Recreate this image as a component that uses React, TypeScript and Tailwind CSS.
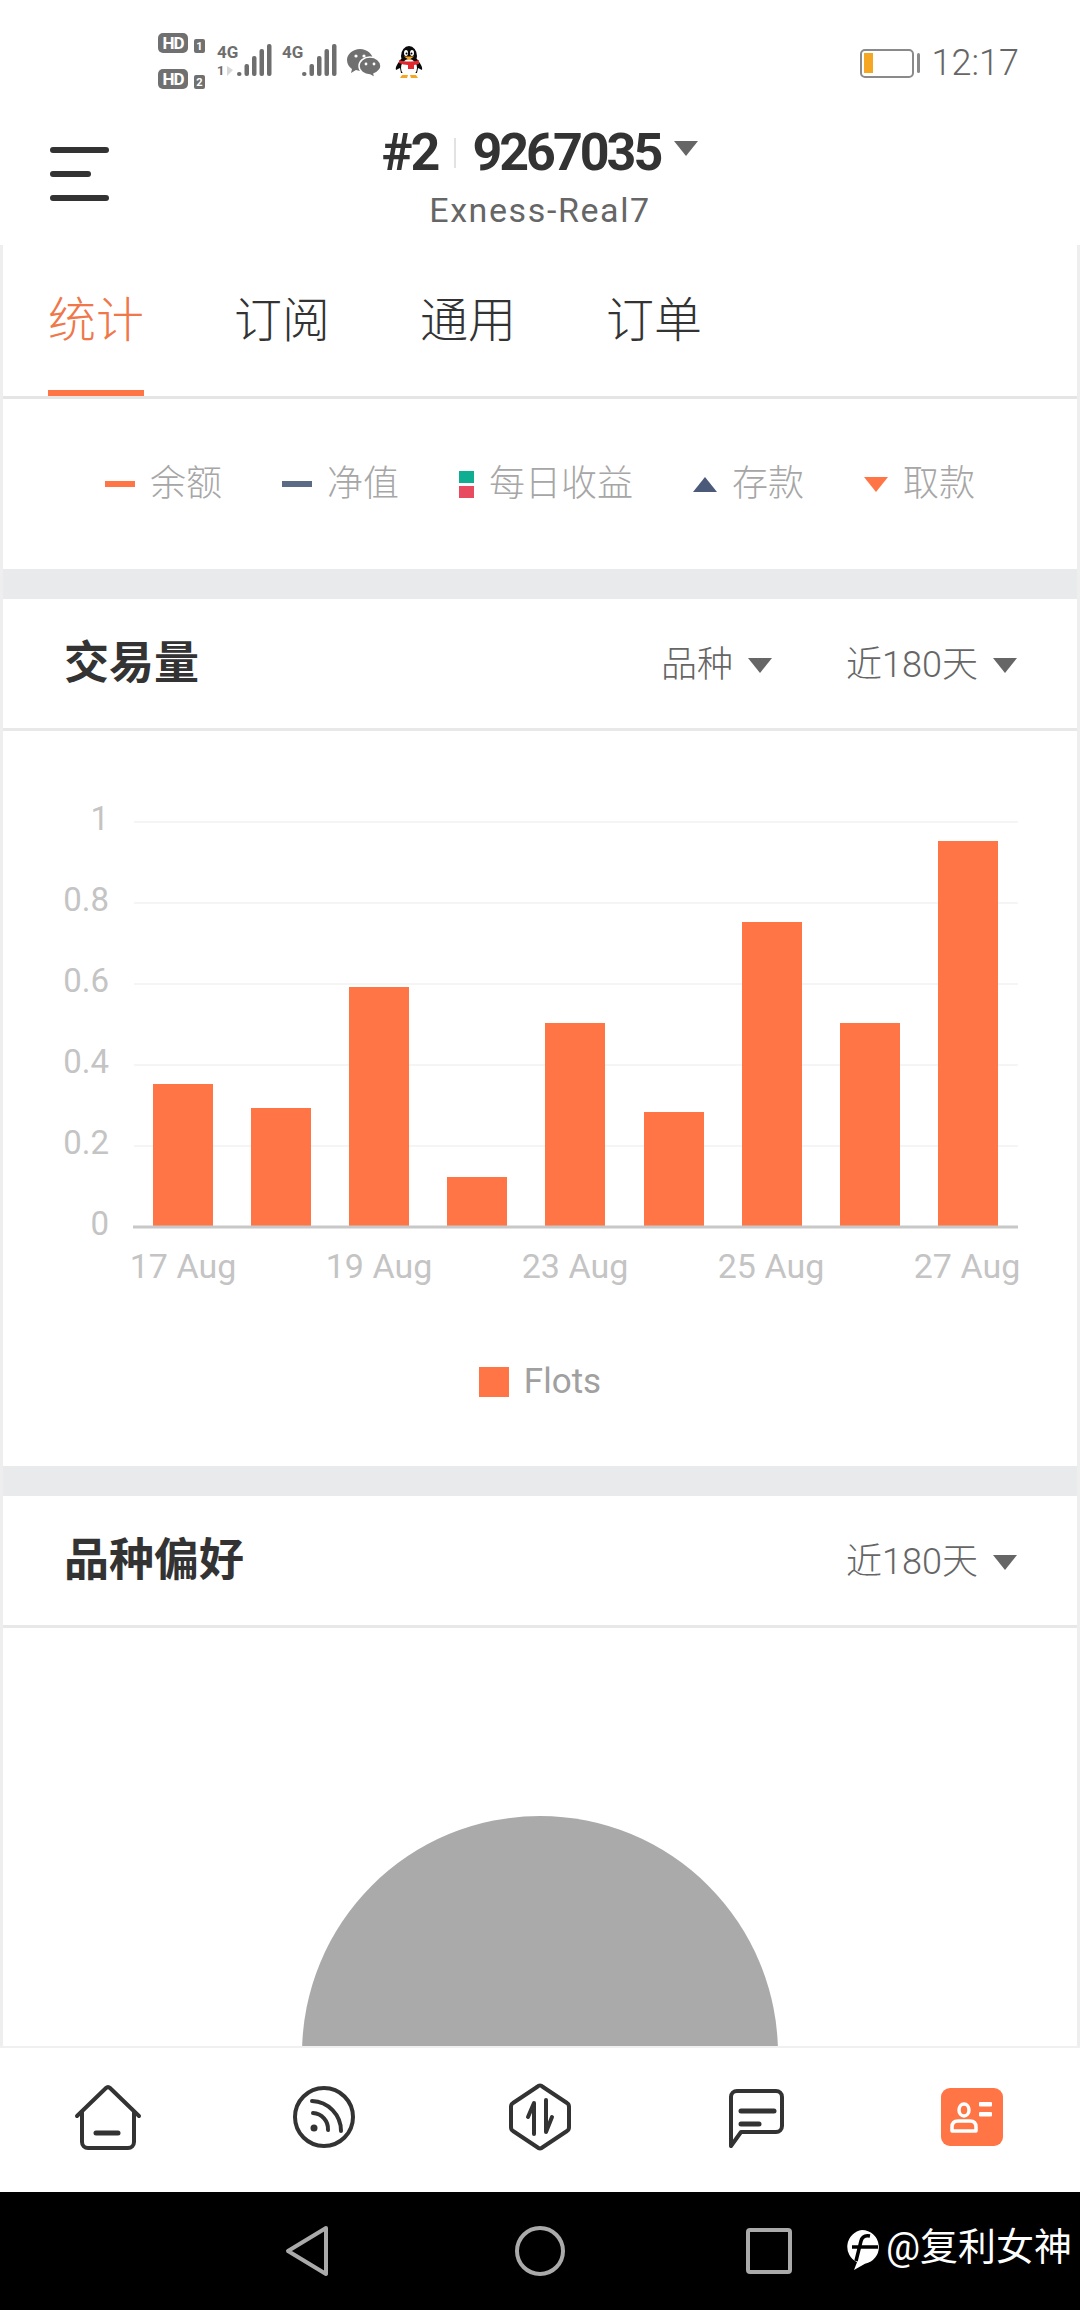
import React from "react";

const bars = [
  { x: 153, top: 1084 },
  { x: 251, top: 1108 },
  { x: 349, top: 987 },
  { x: 447, top: 1177 },
  { x: 545, top: 1023 },
  { x: 644, top: 1112 },
  { x: 742, top: 922 },
  { x: 840, top: 1023 },
  { x: 938, top: 841 },
];

const yTicks = [
  { label: "1", y: 822 },
  { label: "0.8", y: 903 },
  { label: "0.6", y: 984 },
  { label: "0.4", y: 1065 },
  { label: "0.2", y: 1146 },
  { label: "0", y: 1227 },
];

const xTicks = [
  { label: "17 Aug", x: 183 },
  { label: "19 Aug", x: 379 },
  { label: "23 Aug", x: 575 },
  { label: "25 Aug", x: 771 },
  { label: "27 Aug", x: 967 },
];

const Triangle = ({ up = false, color = "#666666" }: { up?: boolean; color?: string }) => (
  <svg width="24" height="15" viewBox="0 0 24 15" className="shrink-0">
    <polygon points={up ? "12,0 24,15 0,15" : "0,0 24,0 12,15"} fill={color} />
  </svg>
);

const Dropdown = ({ label }: { label: string }) => (
  <div className="mt-[3px] flex items-center gap-[15px] text-[36px] font-light text-[#666666]">
    <span>{label}</span>
    <Triangle />
  </div>
);

const SectionHeader = ({ title, filters }: { title: string; filters: string[] }) => (
  <div className="flex h-[132px] shrink-0 items-center justify-between border-b-[3px] border-[#e8e8e8] pl-[61px] pr-[60px]">
    <h2 className="text-[45px] font-bold text-[#333333]">{title}</h2>
    <div className="flex items-center gap-[74px]">
      {filters.map((f) => (
        <Dropdown key={f} label={f} />
      ))}
    </div>
  </div>
);

const Signal = ({ roaming }: { roaming?: boolean }) => (
  <svg width="56" height="38" viewBox="0 0 56 38" className="overflow-visible">
    <text x="0" y="17" className="fill-[#6e6e6e] text-[17px] font-bold">
      4G
    </text>
    {roaming && (
      <text x="0" y="34" className="fill-[#6e6e6e] text-[13px] font-bold">
        1
      </text>
    )}
    {roaming && <polygon points="10,25 16,29 10,35" fill="#d8d8d8" />}
    {[
      { x: 20, h: 4 },
      { x: 27.5, h: 12 },
      { x: 35, h: 20 },
      { x: 42.5, h: 27 },
      { x: 50, h: 32 },
    ].map((b) => (
      <rect key={b.x} x={b.x} y={35 - b.h} width="4.5" height={b.h} rx="2" fill="#6e6e6e" />
    ))}
  </svg>
);

const HdBadge = ({ n }: { n: string }) => (
  <div className="flex items-end gap-[6px]">
    <div className="flex h-[20px] w-[30px] items-center justify-center rounded-[5px] bg-[#707070] text-[17px] font-bold leading-none tracking-[-1px] text-white">
      HD
    </div>
    <div className="flex h-[14px] w-[11px] items-center justify-center rounded-[2px] bg-[#707070] text-[11px] font-bold leading-none text-white">
      {n}
    </div>
  </div>
);

const WeChat = () => (
  <svg width="34" height="30" viewBox="0 0 34 30">
    <path d="M13 1C6 1 0 6 0 12c0 4 2 7 5 9l-1 4 5-3c1 0 3 1 4 1 7 0 13-5 13-11S20 1 13 1z" fill="#707070" />
    <path d="M23 9c-6 0-11 4-11 9s5 9 11 9l5 3-1-4c4-2 7-5 7-8 0-5-5-9-11-9z" fill="#707070" stroke="#fff" strokeWidth="1.5" />
    <circle cx="9" cy="8" r="1.6" fill="#fff" />
    <circle cx="17" cy="8" r="1.6" fill="#fff" />
    <circle cx="19" cy="16" r="1.4" fill="#fff" />
    <circle cx="27" cy="16" r="1.4" fill="#fff" />
  </svg>
);

const Penguin = () => (
  <svg width="28" height="32" viewBox="0 0 28 32">
    <ellipse cx="14" cy="10" rx="8" ry="10" fill="#0a0a0a" />
    <path d="M6 13C3 17 0 21 1 24l4-2 1 5h16l1-5 4 2c1-3-2-7-5-11z" fill="#0a0a0a" />
    <ellipse cx="14" cy="22" rx="8" ry="9" fill="#fff" />
    <ellipse cx="11" cy="7" rx="2" ry="3" fill="#fff" />
    <ellipse cx="17" cy="7" rx="2" ry="3" fill="#fff" />
    <circle cx="11.5" cy="7.5" r="1" fill="#000" />
    <circle cx="16.5" cy="7.5" r="1" fill="#000" />
    <path d="M9 10.5h10l-5 3.5z" fill="#f5a623" />
    <path d="M4 14c6 2 14 2 20 0v4l-5 1v4h-6v-4c-3 0-6-1-9-2z" fill="#e0282e" />
    <path d="M7 29h6l-1 3H5zM15 29h6l2 3h-7z" fill="#f5a623" />
  </svg>
);

const HomeIcon = () => (
  <svg width="70" height="70" viewBox="0 0 70 70" fill="none" stroke="#333333" strokeWidth="4" strokeLinecap="round" strokeLinejoin="round">
    <path d="M4 34 33 6q2-2 4 0l29 28" />
    <path d="M9 30v30a6 6 0 0 0 6 6h40a6 6 0 0 0 6-6V30" />
    <path d="M23 51h22" strokeWidth="5" />
  </svg>
);

const RssIcon = () => (
  <svg width="70" height="70" viewBox="0 0 70 70" fill="none" stroke="#333333" strokeWidth="4" strokeLinecap="round">
    <circle cx="35" cy="35" r="29" />
    <path d="M24 31a16 16 0 0 1 15 17" />
    <path d="M23 19a30 30 0 0 1 29 30" />
    <circle cx="25" cy="46" r="3.5" fill="#333333" stroke="none" />
  </svg>
);

const TradeIcon = () => (
  <svg width="70" height="70" viewBox="0 0 70 70" fill="none" stroke="#333333" strokeWidth="4" strokeLinecap="round" strokeLinejoin="round">
    <path d="M32 5q3-3 6 0l24 16q2 1 2 4v20q0 3-2 4L38 65q-3 3-6 0L8 49q-2-1-2-4V25q0-3 2-4z" />
    <path d="M29 52V21l-6 14" />
    <path d="M41 18v32l6-15" />
  </svg>
);

const ChatIcon = () => (
  <svg width="70" height="70" viewBox="0 0 70 70" fill="none" stroke="#333333" strokeWidth="4" strokeLinecap="round" strokeLinejoin="round">
    <path d="M10 64V15a6 6 0 0 1 6-6h39a6 6 0 0 1 6 6v29a6 6 0 0 1-6 6H20z" />
    <path d="M20 29h33" strokeWidth="5" />
    <path d="M20 42h18" strokeWidth="5" />
  </svg>
);

const ProfileIcon = () => (
  <svg width="62" height="58" viewBox="0 0 62 58">
    <rect width="62" height="58" rx="9" fill="#ff7545" />
    <ellipse cx="23" cy="22" rx="5" ry="6" fill="none" stroke="#fff" strokeWidth="3.5" />
    <path d="M11 43v-4q0-6 6-6h12q6 0 6 6v4z" fill="none" stroke="#fff" strokeWidth="3.5" strokeLinejoin="round" />
    <rect x="38" y="14" width="13" height="4.5" rx="1" fill="#fff" />
    <rect x="38" y="24" width="13" height="4.5" rx="1" fill="#fff" />
  </svg>
);

export default function App() {
  return (
    <div className="flex h-[2310px] w-[1080px] flex-col overflow-hidden bg-white [font-family:Roboto,'Noto_Sans_CJK_SC',sans-serif]">
      {/* status bar */}
      <div className="flex h-[75px] shrink-0 items-start justify-between pl-[158px] pr-[61px] pt-[33px]">
        <div className="flex items-start">
          <div className="flex flex-col gap-[16px]">
            <HdBadge n="1" />
            <HdBadge n="2" />
          </div>
          <div className="ml-[12px] mt-[8px] flex gap-[9px]">
            <Signal roaming />
            <Signal />
          </div>
          <div className="ml-[9px] mt-[15px]">
            <WeChat />
          </div>
          <div className="ml-[14px] mt-[13px]">
            <Penguin />
          </div>
        </div>
        <div className="mt-[12px] flex items-center">
          <div className="flex h-[29px] w-[54px] items-center rounded-[5px] border-2 border-[#8a8a8a] pl-[2px]">
            <div className="h-[20px] w-[9px] bg-[#f5a623]" />
          </div>
          <div className="ml-[3px] h-[20px] w-[3px] rounded-full bg-[#8a8a8a]" />
          <span className="ml-[12px] text-[36px] font-light leading-none text-[#666666]">12:17</span>
        </div>
      </div>

      {/* header */}
      <div className="grid h-[170px] shrink-0 grid-cols-[1fr_auto_1fr] pt-[50px]">
        <div className="flex flex-col gap-[18px] pl-[50px] pt-[22px]">
          <div className="h-[6px] w-[59px] rounded-full bg-[#333333]" />
          <div className="h-[6px] w-[41px] rounded-full bg-[#333333]" />
          <div className="h-[6px] w-[59px] rounded-full bg-[#333333]" />
        </div>
        <div className="flex flex-col items-center">
          <div className="flex h-[56px] items-center text-[52px] font-bold leading-none text-[#333333]">
            <span className="tracking-[-2px]">#2</span>
            <span className="mx-[16px] h-[30px] w-[2px] bg-[#e2e2e2]" />
            <span className="tracking-[-3px]">9267035</span>
            <span className="ml-[14px] mb-[10px]">
              <Triangle />
            </span>
          </div>
          <div className="mt-[12px] text-[34px] leading-none tracking-[1.6px] text-[#666666]">Exness-Real7</div>
        </div>
        <div />
      </div>

      {/* scrollable content */}
      <div className="flex min-h-0 flex-1 flex-col overflow-hidden border-x-[3px] border-[#eeeeee]">
        <div className="flex h-[154px] shrink-0 gap-[90px] border-b-[3px] border-[#e5e5e5] pl-[45px]">
          {["统计", "订阅", "通用", "订单"].map((tab, i) => (
            <div
              key={tab}
              className={`relative flex items-center text-[48px] font-light ${i === 0 ? "text-[#f0774a]" : "text-[#333333]"}`}
            >
              {tab}
              {i === 0 && <div className="absolute inset-x-0 bottom-0 h-[6px] bg-[#ff7545]" />}
            </div>
          ))}
        </div>

        <div className="flex h-[170px] shrink-0 items-center gap-[60px] pl-[102px] text-[36px] font-light text-[#a6a6a6]">
          <div className="flex items-center gap-[15px]">
            <div className="h-[6px] w-[30px] bg-[#ff7545]" />
            <span>余额</span>
          </div>
          <div className="flex items-center gap-[15px]">
            <div className="h-[6px] w-[30px] bg-[#5b6a85]" />
            <span>净值</span>
          </div>
          <div className="flex items-center gap-[15px]">
            <div className="flex w-[15px] flex-col gap-[3px]">
              <div className="h-[12px] bg-[#0fae92]" />
              <div className="h-[12px] bg-[#e84a5f]" />
            </div>
            <span>每日收益</span>
          </div>
          <div className="flex items-center gap-[15px]">
            <Triangle up color="#4a5a78" />
            <span>存款</span>
          </div>
          <div className="flex items-center gap-[15px]">
            <Triangle color="#ff7545" />
            <span>取款</span>
          </div>
        </div>

        <div className="h-[30px] shrink-0 bg-[#e9eaec]" />

        <SectionHeader title="交易量" filters={["品种", "近180天"]} />

        <div className="h-[735px] shrink-0">
          <svg width="1074" height="620" viewBox="3 731 1074 620" className="block">
            {yTicks.slice(0, 5).map((t) => (
              <line key={t.y} x1="134" x2="1018" y1={t.y} y2={t.y} stroke="#f5f5f5" strokeWidth="2" />
            ))}
            {bars.map((b) => (
              <rect key={b.x} x={b.x} y={b.top} width="60" height={1226 - b.top} fill="#ff7545" />
            ))}
            <line x1="133" x2="1018" y1="1227" y2="1227" stroke="#c8c8c8" strokeWidth="3" />
            {yTicks.map((t) => (
              <text key={t.label} x="109" y={t.y + 8} textAnchor="end" className="fill-[#c4c4c4] text-[33px]">
                {t.label}
              </text>
            ))}
            {xTicks.map((t) => (
              <text key={t.label} x={t.x} y="1278" textAnchor="middle" className="fill-[#c4c4c4] text-[34px]">
                {t.label}
              </text>
            ))}
          </svg>
          <div className="flex h-[62px] items-center justify-center gap-[15px] text-[35px] text-[#a0a0a0]">
            <div className="h-[30px] w-[30px] bg-[#ff7545]" />
            <span>Flots</span>
          </div>
        </div>

        <div className="h-[30px] shrink-0 bg-[#e9eaec]" />

        <SectionHeader title="品种偏好" filters={["近180天"]} />

        <div className="min-h-0 flex-1 overflow-hidden pt-[188px]">
          <div className="mx-auto h-[476px] w-[476px] rounded-full bg-[#aaaaaa]" />
        </div>
      </div>

      {/* bottom tabs */}
      <div className="grid h-[146px] shrink-0 grid-cols-5 items-center justify-items-center border-t-2 border-[#f0f0f0] bg-white pb-[6px]">
        <HomeIcon />
        <RssIcon />
        <TradeIcon />
        <ChatIcon />
        <ProfileIcon />
      </div>

      {/* android nav */}
      <div className="relative flex h-[118px] shrink-0 items-center justify-center gap-[184px] bg-black">
        <svg width="46" height="52" viewBox="0 0 46 52" fill="none" stroke="#aaaaaa" strokeWidth="4" strokeLinejoin="round">
          <path d="M41 3 3 26l38 23z" />
        </svg>
        <svg width="50" height="50" viewBox="0 0 50 50" fill="none" stroke="#aaaaaa" strokeWidth="4">
          <circle cx="25" cy="25" r="23" />
        </svg>
        <svg width="46" height="46" viewBox="0 0 46 46" fill="none" stroke="#aaaaaa" strokeWidth="4" strokeLinejoin="round" className="-ml-[3px] mr-[3px]">
          <rect x="2" y="2" width="42" height="42" rx="2" />
        </svg>
        <div className="absolute right-[8px] top-[36px] flex items-center gap-[6px] text-[38px] leading-none text-white">
          <svg width="36" height="42" viewBox="0 0 36 42" className="-mb-[6px]">
            <path d="M18 1a17 17 0 0 1 3 33.700L10 41l3-7.800A17 17 0 0 1 18 1z" fill="#fff" />
            <path d="M26 7c-5-1-8 1-9 5l-5 20M8 18h26" fill="none" stroke="#000" strokeWidth="3.5" />
          </svg>
          <span>@复利女神</span>
        </div>
      </div>
    </div>
  );
}
